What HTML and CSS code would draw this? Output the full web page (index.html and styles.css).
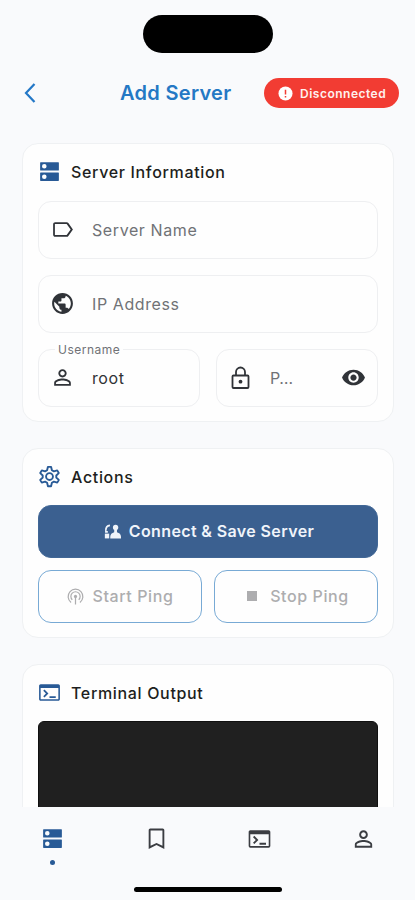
FILE: index.html
```html
<!DOCTYPE html>
<html lang="en">
<head>
<meta charset="utf-8">
<meta name="viewport" content="width=device-width, initial-scale=1">
<title>Add Server</title>
<link rel="stylesheet" href="styles.css">
</head>
<body>
<svg class="defs" aria-hidden="true">
  <symbol id="dns" viewBox="0 0 24 24"><path fill-rule="evenodd" d="M20.500 13H3.500c-.3 0-.5.200-.5.500v7c0 .3.200.5.500.5h17c.3 0 .5-.2.500-.5v-7c0-.3-.2-.5-.5-.5zM7 19.200a2.200 2.200 0 1 1 0-4.400 2.200 2.200 0 0 1 0 4.400zM20.500 3H3.500c-.3 0-.5.200-.5.500v7c0 .3.200.5.500.5h17c.3 0 .5-.2.500-.5v-7c0-.3-.2-.5-.5-.5zM7 9.200a2.200 2.200 0 1 1 0-4.400 2.200 2.200 0 0 1 0 4.400z"/></symbol>
  <symbol id="person" viewBox="0 0 24 24"><path d="M12 5.700c1.200 0 2.200 1 2.200 2.200s-1 2.200-2.200 2.200-2.200-1-2.200-2.200 1-2.200 2.200-2.200m0 9.100c3 0 6.300 1.400 6.300 2.300v1.200H5.700v-1.200c0-.9 3.300-2.300 6.300-2.300M12 4C9.790 4 8 5.790 8 8s1.790 4 4 4 4-1.790 4-4-1.790-4-4-4zm0 9c-2.670 0-8 1.340-8 4v3h16v-3c0-2.660-5.330-4-8-4z"/></symbol>
  <symbol id="terminal" viewBox="0 0 24 24"><path d="M20.500 4h-17C2.700 4 2 4.700 2 5.500v13c0 .8.700 1.500 1.500 1.500h17c.8 0 1.500-.7 1.500-1.500v-13c0-.8-.7-1.500-1.500-1.500zm0 14.500h-17V7.600h17v10.900zM18 17.200h-6v-1.700h6v1.700zM7.200 16.700 6 15.500l2.600-2.600L6 10.300l1.200-1.200 3.800 3.800-3.800 3.800z"/></symbol>
</svg>

<div class="status"><div class="island"></div></div>

<header class="header">
  <svg class="back" viewBox="0 0 14 22"><path d="M11.500 2 3 11l8.500 9"/></svg>
  <h1 class="title">Add Server</h1>
  <div class="pill">
    <svg class="alert" viewBox="0 0 16 16"><circle cx="8" cy="8" r="7.500"/><path d="M8 4v5M8 10.700v1.500"/></svg>
    <span>Disconnected</span>
  </div>
</header>

<main class="content">
  <section class="card">
    <h2 class="heading"><svg class="icon"><use href="#dns"/></svg><span>Server Information</span></h2>
    <div class="field">
      <svg class="icon" viewBox="0 0 24 24"><path d="M17.630 5.840C17.270 5.330 16.670 5 16 5L5 5.010C3.900 5.010 3 5.900 3 7v10c0 1.100.9 1.990 2 1.990L16 19c.67 0 1.270-.33 1.630-.84L22 12l-4.370-6.160zM16 17.300H4.700V6.700H16l3.800 5.300-3.800 5.300z"/></svg>
      <span>Server Name</span>
    </div>
    <div class="field">
      <svg class="icon" viewBox="0 0 24 24"><path d="M12 2C6.480 2 2 6.480 2 12s4.480 10 10 10 10-4.480 10-10S17.520 2 12 2zm-1 17.930c-3.950-.49-7-3.850-7-7.930 0-.62.08-1.210.21-1.790L9 15v1c0 1.100.9 2 2 2v1.930zm6.900-2.540c-.26-.81-1-1.390-1.900-1.390h-1v-3c0-.55-.45-1-1-1H8v-2h2c.55 0 1-.45 1-1V7h2c1.100 0 2-.9 2-2v-.41c2.930 1.190 5 4.060 5 7.410 0 2.080-.8 3.970-2.100 5.390z"/></svg>
      <span>IP Address</span>
    </div>
    <div class="pair">
      <div class="field">
        <span class="legend">Username</span>
        <svg class="icon"><use href="#person"/></svg>
        <span class="value">root</span>
      </div>
      <div class="field">
        <svg class="icon lock" viewBox="0 0 26 26"><rect x="5.500" y="10.500" width="16" height="12.500" rx="1"/><path d="M9 10.500V7a4.500 4.500 0 0 1 9 0v3.500"/><circle cx="13.500" cy="16.700" r="1.900"/></svg>
        <span class="grow">P…</span>
        <svg class="icon eye" viewBox="0 0 24 24"><path d="M12 4.500C7 4.500 2.730 7.610 1 12c1.730 4.390 6 7.500 11 7.500s9.270-3.110 11-7.500c-1.730-4.390-6-7.500-11-7.500zM12 17c-2.760 0-5-2.240-5-5s2.240-5 5-5 5 2.240 5 5-2.240 5-5 5zm0-8c-1.660 0-3 1.340-3 3s1.340 3 3 3 3-1.340 3-3-1.340-3-3-3z"/></svg>
      </div>
    </div>
  </section>

  <section class="card actions">
    <h2 class="heading"><svg class="icon gear" viewBox="0 0 24 24"><path d="M10.500 2.700h3l.8 3.300 1.900 1.100 3.200-1 1.500 2.600-2.400 2.300v2l2.400 2.300-1.500 2.600-3.200-1-1.900 1.100-.8 3.300h-3L9.700 18l-1.900-1.100-3.200 1-1.500-2.600L5.500 13v-2L3.100 8.700l1.500-2.600 3.200 1L9.700 6z"/><circle cx="12" cy="12" r="3.300"/></svg><span>Actions</span></h2>
    <button class="btn primary">
      <svg class="connect" viewBox="0 0 16 14"><path class="line" d="M5.600 1.300C2.900 1.500 1.600 3.300 1.700 6.400M1 7.300h2.600"/><path d="M.8 9h4.100v4.500H.8z"/><circle cx="10.900" cy="3.200" r="2.500"/><path d="M9.600 5h2.600v2.700c2.300.6 3.800 2 3.800 4.300v1.500H5.900V12c0-2.300 1.500-3.700 3.700-4.300z"/></svg>
      <span>Connect &amp; Save Server</span>
    </button>
    <div class="pair buttons">
      <button class="btn outline">
        <svg class="antenna" viewBox="0 0 18 18"><path d="M4.300 15.300a7.800 7.800 0 1 1 9.400 0M5.600 12.400a4.900 4.900 0 1 1 6.800 0M9 9v8.500"/><circle cx="9" cy="8.900" r="1.700"/></svg>
        <span>Start Ping</span>
      </button>
      <button class="btn outline stop">
        <svg class="square" viewBox="0 0 10 10"><path d="M0 0h10v10H0z"/></svg>
        <span>Stop Ping</span>
      </button>
    </div>
  </section>

  <section class="card">
    <h2 class="heading"><svg class="icon"><use href="#terminal"/></svg><span>Terminal Output</span></h2>
    <div class="console"></div>
  </section>
</main>

<footer class="footer">
  <nav class="tabs">
    <a class="tab active"><svg class="icon"><use href="#dns"/></svg><i class="dot"></i></a>
    <a class="tab"><svg class="icon" viewBox="0 0 24 24"><path d="M18 2.500H6c-.8 0-1.500.7-1.500 1.500v18l7.500-3.700 7.500 3.700V4c0-.8-.7-1.500-1.500-1.500zM17.700 19 12 16.200 6.300 19V4.300h11.400V19z"/></svg></a>
    <a class="tab"><svg class="icon wide"><use href="#terminal"/></svg></a>
    <a class="tab"><svg class="icon wide"><use href="#person"/></svg></a>
  </nav>
  <div class="home"></div>
</footer>
</body>
</html>
```
FILE: styles.css
```css
* { box-sizing: border-box; }

body {
  margin: 0;
  width: 415px;
  height: 900px;
  overflow: hidden;
  display: flex;
  flex-direction: column;
  background: #f9fafc;
  color: #1d1e20;
  font-family: Inter, "Liberation Sans", sans-serif;
}

svg { display: block; flex: none; fill: currentColor; }
.defs { position: absolute; width: 0; height: 0; }

.status { height: 67px; padding-top: 15px; flex: none; }
.island { width: 130px; height: 38px; margin-left: 143px; border-radius: 19px; background: #000; }

.header { height: 76px; flex: none; display: flex; align-items: flex-start; padding: 11px 16px 0 23px; }
.back { width: 14px; height: 22px; margin-top: 4px; fill: none; stroke: #2478c7; stroke-width: 2.200; }
.title { margin: 0 0 0 83px; width: 144px; line-height: 31px; font-size: 20px; font-weight: 600; letter-spacing: .3px; color: #2478c4; white-space: nowrap; }
.pill { width: 135px; height: 30px; display: flex; align-items: center; gap: 7px; padding-left: 14px; border-radius: 15px; background: #f23c33; color: #fff1ee; font-size: 12px; font-weight: 600; letter-spacing: .5px; }
.alert { width: 15px; height: 15px; fill: #fff; }
.alert path { stroke: #f23c33; stroke-width: 1.600; }

.content { flex: none; height: 664px; overflow: hidden; display: flex; flex-direction: column; gap: 26px; padding: 0 21px 0 22px; }
.card { flex: none; height: 279px; padding: 15px; border: 1px solid #eff1f3; border-radius: 16px; background: #fefefe; }
.actions { height: 190px; }
.heading { display: flex; align-items: center; gap: 8px; height: 26px; margin: 0 0 16px; font-size: 16px; font-weight: 500; letter-spacing: .66px; white-space: nowrap; }
.icon { width: 25px; height: 25px; }
.heading .icon { margin: 0 1px 1px -1px; color: #285a96; }

.field { position: relative; height: 58px; margin-bottom: 16px; padding-left: 11px; display: flex; align-items: center; gap: 17px; border: 1px solid #eeeff1; border-radius: 13px; color: #707276; font-size: 16px; letter-spacing: .6px; }
.field .icon { color: #303338; }
.field > svg, .field > span:not(.legend) { margin-bottom: 1px; }
.pair { display: grid; grid-template-columns: 1fr 1fr; gap: 16px; }
.pair .field { margin: 0; }
.legend { position: absolute; left: 16px; top: -8px; padding: 0 3px; background: #fefefe; font-size: 12px; line-height: 16px; letter-spacing: .5px; }
.value { color: #303236; }
.grow { flex: 1; margin-left: -1px; }
.field .lock { width: 26px; height: 26px; margin-right: 1px; margin-left: -1px; }
.lock rect, .lock path { fill: none; stroke: currentColor; stroke-width: 1.800; }
.eye { margin-right: 11px; }
.gear { fill: none; stroke: currentColor; stroke-width: 1.800; stroke-linejoin: round; }

.actions .heading { height: 25px; }
.btn { width: 100%; height: 53px; margin: 0; padding: 0 0 1px; display: flex; align-items: center; justify-content: center; border: 1px solid #78aad5; border-radius: 13px; font: 600 16px Inter, "Liberation Sans", sans-serif; letter-spacing: .38px; white-space: nowrap; }
.primary { gap: 8px; padding-left: 2px; background: #3b6090; border-color: #416796; color: #f0f4fa; }
.connect { width: 17px; height: 15px; }
.connect .line { fill: none; stroke: currentColor; stroke-width: 1.600; }
.buttons { gap: 12px; margin-top: 12px; }
.outline { background: #fefefe; color: #adadaf; font-weight: 500; letter-spacing: .6px; gap: 9px; }
.antenna { width: 17px; height: 17px; fill: none; stroke: currentColor; stroke-width: 1.300; }
.antenna circle { fill: currentColor; stroke: none; }
.stop { gap: 13px; padding-left: 4px; }
.square { width: 10px; height: 10px; }

.console { height: 110px; margin-top: -1px; border: 1px solid #101010; border-radius: 6px; background: #202020; }

.footer { height: 93px; flex: none; background: #f9fafc; }
.tabs { height: 80px; display: grid; grid-template-columns: repeat(4, 1fr); padding-left: 1px; }
.tab { display: flex; flex-direction: column; align-items: center; padding-top: 19px; color: #3b3d42; }
.wide { width: 27px; height: 26px; }
.active { color: #285a96; }
.dot { width: 5px; height: 5px; margin-top: 9px; border-radius: 50%; background: #285a96; }
.home { width: 148px; height: 5px; margin-left: 134px; border-radius: 3px; background: #000; }
```
